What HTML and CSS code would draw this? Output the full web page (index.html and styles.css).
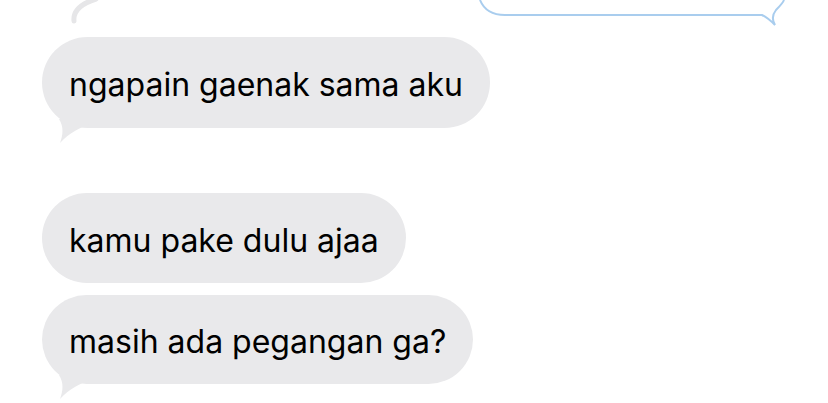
FILE: index.html
```html
<!DOCTYPE html>
<html>
<head>
<meta charset="utf-8">
<link rel="stylesheet" href="styles.css">
</head>
<body>
<div class="chat">
  <svg class="top" width="828" height="37" viewBox="0 0 828 37">
    <path d="M74 21 C73 12 80 4 96 -1" fill="none" stroke="#e6e6e8" stroke-width="5" stroke-linecap="round"/>
    <path d="M480 0 C484 10 492 15 505 15 L762 15 C768 18 772 22 775 25 C772 20 772 15 776 10 C780 6 783 3 784 0" fill="none" stroke="#a9cdee" stroke-width="2"/>
  </svg>
  <div class="bubble tail b1">ngapain gaenak sama aku
    <svg class="tail-svg" width="36" height="26" viewBox="0 0 36 26"><path d="M3 0 L36 0 L36 5 C24 8 13 14 4 24 C7 16 8 8 3 0 Z" fill="#e9e9eb"/></svg>
  </div>
  <div class="bubble b2">kamu pake dulu ajaa</div>
  <div class="bubble tail b3">masih ada pegangan ga?
    <svg class="tail-svg" width="36" height="26" viewBox="0 0 36 26"><path d="M3 0 L36 0 L36 5 C24 8 13 14 4 24 C7 16 8 8 3 0 Z" fill="#e9e9eb"/></svg>
  </div>
</div>
</body>
</html>
```
FILE: styles.css
```css
html, body {
  margin: 0;
  padding: 0;
  background: #ffffff;
}
body {
  width: 828px;
  height: 403px;
  overflow: hidden;
}
.chat {
  display: flex;
  flex-direction: column;
  align-items: flex-start;
  padding-left: 42px;
}
.top {
  display: block;
  margin-left: -42px;
}
.bubble {
  position: relative;
  display: flex;
  align-items: center;
  height: 91px;
  box-sizing: border-box;
  padding: 4px 27px 0 27px;
  background: #e9e9eb;
  border-radius: 46px;
  font-family: Inter, "Noto Sans", sans-serif;
  font-size: 32px;
  color: #000;
  white-space: nowrap;
}
.b2 {
  margin-top: 65px;
  height: 90px;
}
.b3 {
  margin-top: 12px;
  height: 89px;
}
.tail-svg {
  position: absolute;
  left: 14px;
  bottom: -17px;
}
```
